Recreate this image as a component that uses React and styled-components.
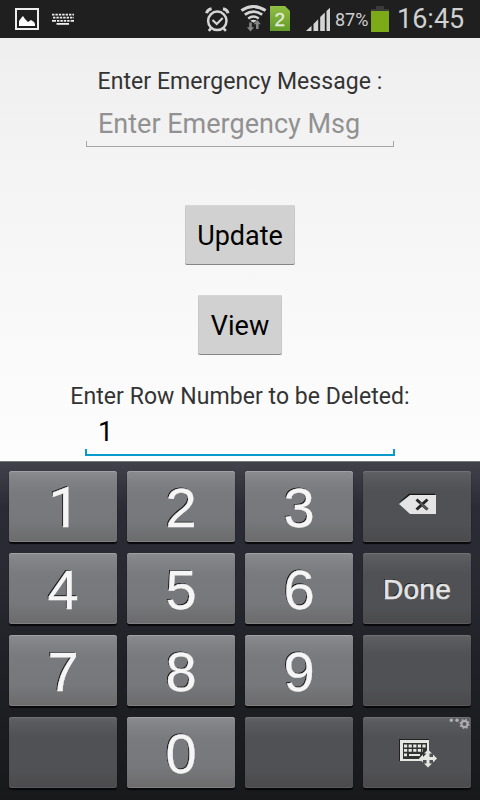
import React from 'react';
import styled, { createGlobalStyle } from 'styled-components';

const GlobalStyle = createGlobalStyle`
  * { box-sizing: border-box; }
  body { margin: 0; font-family: Roboto, "Liberation Sans", sans-serif; }
`;

const Screen = styled.div`
  width: 480px;
  height: 800px;
  overflow: hidden;
  display: flex;
  flex-direction: column;
`;

const StatusBar = styled.header`
  height: 38px;
  flex: none;
  display: flex;
  align-items: flex-start;
  background: #1f1f1f;
  color: #d0d0d0;
  svg { display: block; flex: none; }
`;

const StatusIcons = styled.svg`
  margin-right: ${(p) => p.$gap || 0}px;
`;

const StatusText = styled.span`
  font-size: ${(p) => p.$size}px;
  line-height: 38px;
  white-space: nowrap;
  width: ${(p) => p.$width}px;
  padding-top: ${(p) => p.$drop || 0}px;
`;

const Form = styled.main`
  height: 423px;
  flex: none;
  display: flex;
  flex-direction: column;
  align-items: center;
  background: linear-gradient(#efefef, #f8f8f8 60%, #fdfdfd);
`;

const Label = styled.label`
  margin-top: ${(p) => p.$top}px;
  height: 32px;
  line-height: 34px;
  font-size: 23px;
  color: #333;
  white-space: nowrap;
  letter-spacing: 0.06px;
`;

const Field = styled.div`
  width: ${(p) => (p.$active ? 310 : 308)}px;
  height: ${(p) => (p.$active ? 44 : 50)}px;
  display: flex;
  flex-direction: column;
  justify-content: space-between;
  color: ${(p) => (p.$active ? '#000' : '#919191')};
`;

const Value = styled.span`
  padding-left: ${(p) => (p.$active ? 13 : 12)}px;
  height: 36px;
  line-height: 36px;
  margin-top: ${(p) => p.$top}px;
  margin-bottom: -10px;
  font-size: 27px;
  white-space: nowrap;
`;

const Underline = styled.div`
  height: ${(p) => (p.$active ? 7 : 6)}px;
  border: solid ${(p) => (p.$active ? '#0a9bcd' : '#a6a6a6')};
  border-width: ${(p) => (p.$active ? '0 2px 2px' : '0 1px 1px')};
`;

const Button = styled.button`
  width: ${(p) => p.$width}px;
  height: 59px;
  flex: none;
  margin: ${(p) => p.$top}px 0 0;
  padding: 3px 0 0;
  border: 0;
  border-radius: 2px;
  background: #d1d1d1;
  box-shadow: inset 0 1px #d6d6d6, inset 1px 0 #c8c8c8, inset -1px 0 #c8c8c8, 0 1px #858585;
  color: #000;
  font: 27px/32px Roboto, sans-serif;
`;

const Keyboard = styled.section`
  height: 339px;
  flex: none;
  padding: 9px 9px 0;
  border-top: 1px solid #77777b;
  display: grid;
  grid-template-columns: repeat(4, 108px);
  grid-auto-rows: 71px;
  gap: 11px 10px;
  background: linear-gradient(#42424b 0, #2b2b35 45px, #292932 120px, #202126 200px, #18191b 100%);
`;

const Key = styled.button`
  position: relative;
  display: flex;
  align-items: center;
  justify-content: center;
  height: 71px;
  margin: 0;
  padding: 0;
  border: 0;
  border-radius: 3px;
  background: ${(p) => (p.$dark
    ? 'linear-gradient(#606164 0, #58595c 8px, #505154 20px, #505154 54px, #4a4a4c 100%)'
    : 'linear-gradient(#8b8c8f 0, #828386 8px, #797a7d 22px, #77787b 50px, #6b6b6c 100%)')};
  box-shadow: inset 0 1px ${(p) => (p.$dark ? '#707174' : '#a0a0a2')},
    inset 0 -1px ${(p) => (p.$dark ? '#5a5a5c' : '#808081')}, 0 2px 1px #08080a;
  color: ${(p) => (p.$dark ? '#e4e4e4' : '#f5f5f5')};
  font-family: "Liberation Sans", Arial, sans-serif;
  font-size: ${(p) => (p.$dark ? 28 : 56)}px;
  line-height: 71px;
  text-shadow: -1px -1px 0 #151515;
`;

const DoneText = styled.span`
  -webkit-text-stroke: 0.6px #e4e4e4;
  letter-spacing: 0.3px;
  margin-top: 2px;
`;

const Digit = styled.span`
  margin-top: 2px;
  -webkit-text-stroke: 0.3px #f5f5f5;
`;

/* Roboto's figure one is a bare stem with a flag and no foot */
const PlainOne = styled(Digit)`
  font-family: Roboto, sans-serif;
  margin-top: 4px;
  margin-left: 2px;
`;

const Corner = styled.svg`
  position: absolute;
  right: 0;
  top: 0;
`;

const BackspaceIcon = styled.svg`
  margin-top: -5px;
`;

const NotificationIcons = () => (
  <StatusIcons $gap={129} width="76" height="38" viewBox="0 0 76 38">
    <rect x="16" y="9" width="22" height="20" fill="none" stroke="#eee" strokeWidth="2" />
    <path d="M19 26v-5l3-4 1-1 2 3 3 3 3-2 3 2 1 2v2z" fill="#fff" />
    <g stroke="#eee" strokeWidth="1.8">
      <path d="M52 14.6h22" strokeDasharray="2.4 1" />
      <path d="M53 17.7h21" strokeDasharray="2.4 1" />
      <path d="M52 20.8h22" strokeDasharray="4 1 2.4 1 2.4 1 2.4 1 2.4 1 4" />
      <path d="M56.5 23.9h12.5" />
    </g>
  </StatusIcons>
);

const SystemIcons = () => (
  <StatusIcons $gap={5} width="125" height="38" viewBox="205 0 125 38">
    <g fill="none" stroke="#d5d5d5">
      <circle cx="217.3" cy="20.8" r="9.2" strokeWidth="2.5" />
      <path d="M212.5 20l4.2 4 6-6" strokeWidth="2.2" />
      <path d="M206.6 13.2q.6-3.5 5-4.5M228 13.2q-.6-3.5-5-4.5" strokeWidth="3" />
      <path d="M211 28.5l-2.3 2.3M223.6 28.5l2.3 2.3" strokeWidth="2.6" />
      <path d="M241.4 10.6q12.1-8 24.2 0" strokeWidth="3" />
      <path d="M244.8 14.6q8.7-6 17.4 0" strokeWidth="2.7" />
      <path d="M248.2 18.5q5.3-4 10.6 0" strokeWidth="2.4" />
    </g>
    <path d="M250.3 20.8q3.2-2.2 6.4 0l-3.2 2z" fill="#d5d5d5" />
    <path d="M249.2 22.5h2.6v4.7h2.3l-3.6 4.3-3.6-4.3h2.3zM256 29h2.6v-4.7h2.3l-3.6-4.3-3.6 4.3h2.3z" fill="#858585" />
    <defs>
      <linearGradient id="sim" x1="0" y1="0" x2="0" y2="1">
        <stop stopColor="#91bd43" /><stop offset="1" stopColor="#619c29" />
      </linearGradient>
    </defs>
    <path d="M270 6h15l5 5v20h-20z" fill="url(#sim)" />
    <text x="279.8" y="26" textAnchor="middle" fontSize="19" fill="#e4ebdc" stroke="#e4ebdc" strokeWidth=".3" fontFamily="Liberation Sans">2</text>
    <path d="M306 31l5.5-5.2V31zM313.5 24l4.7-4.7V31h-4.7zM320.2 17l4.6-4.4V31h-4.6zM326.5 11l3.5-3.3V31h-3.5z" fill="#d5d5d5" />
  </StatusIcons>
);

const Battery = () => (
  <StatusIcons $gap={8} width="18" height="38" viewBox="371 0 18 38">
    <path d="M371 9h5V6h8v3h5v3h-18z" fill="#3a3a3a" />
    <path d="M371 11h18v21h-18z" fill="#7dab18" />
  </StatusIcons>
);

const Backspace = () => (
  <BackspaceIcon width="40" height="24" viewBox="397 492 40 24">
    <path d="M398 503l11-9.3h26v2h-25z" fill="#171717" />
    <path d="M399 504l11-9h26v19h-26z" fill="#e4e4e4" />
    <path d="M416.5 499.5l11 10M427.5 499.5l-11 10" stroke="#252525" strokeWidth="3" />
    <path d="M420 502.5l2 2 5.5 5" stroke="#58595c" strokeWidth="2" fill="none" />
  </BackspaceIcon>
);

const KeyboardMove = () => (
  <svg width="40" height="30" viewBox="397 738 40 30">
    <path d="M399 739h30v5h-27v17h-3z" fill="#202020" />
    <path d="M400 740h29v16l-8 5h-21z" fill="#e4e8e1" />
    <path d="M403 743h24v10l-6 6h-18z" fill="#303232" />
    <path d="M404 746h22M404 750.4h19M404 754.8h3" stroke="#e4e8e1" strokeWidth="2.8" strokeDasharray="3.2 1.4" />
    <path d="M409 755h11" stroke="#e4e8e1" strokeWidth="2" />
    <path d="M428 749.5l4 4h-2.5v3.5h3.5v-2.5l4 4-4 4v-2.5h-3.5v3.5h2.5l-4 4-4-4h2.5v-3.5h-3.5v2.5l-4-4 4-4v2.5h3.5v-3.5h-2.5z" fill="#e4e8e1" />
  </svg>
);

const Options = () => (
  <Corner width="26" height="14" viewBox="445 717 26 14">
    <g fill="#b0b0b2"><circle cx="451.3" cy="720.3" r="1.7" /><circle cx="457" cy="720.3" r="1.7" /></g>
    <circle cx="464.5" cy="724" r="3" fill="none" stroke="#b0b0b2" strokeWidth="1.8" />
    <circle cx="464.5" cy="724" r="4.3" fill="none" stroke="#b0b0b2" strokeWidth="1.5" strokeDasharray="1.7 1.68" />
  </Corner>
);

const keys = ['1', '2', '3', 'back', '4', '5', '6', 'done', '7', '8', '9', '', '', '0', '', 'mode'];

const KeyFace = ({ name }) => {
  if (name === 'back') return <Backspace />;
  if (name === 'done') return <DoneText>Done</DoneText>;
  if (name === 'mode') return <><KeyboardMove /><Options /></>;
  if (name === '1') return <PlainOne>1</PlainOne>;
  return <Digit>{name}</Digit>;
};

export default function App() {
  return (
    <Screen>
      <GlobalStyle />
      <StatusBar>
        <NotificationIcons />
        <SystemIcons />
        <StatusText $size={18} $width={36} $drop={1}>87%</StatusText>
        <Battery />
        <StatusText $size={27} $width={70}>16:45</StatusText>
      </StatusBar>
      <Form>
        <Label $top={27}>Enter Emergency Message :</Label>
        <Field>
          <Value $top={9}>Enter Emergency Msg</Value>
          <Underline />
        </Field>
        <Button $width={110} $top={58}>Update</Button>
        <Button $width={84} $top={31}>View</Button>
        <Label $top={26}>Enter Row Number to be Deleted:</Label>
        <Field $active>
          <Value $active $top={2}>1</Value>
          <Underline $active />
        </Field>
      </Form>
      <Keyboard>
        {keys.map((name, i) => (
          <Key key={i} $dark={!/^\d$/.test(name)}><KeyFace name={name} /></Key>
        ))}
      </Keyboard>
    </Screen>
  );
}
